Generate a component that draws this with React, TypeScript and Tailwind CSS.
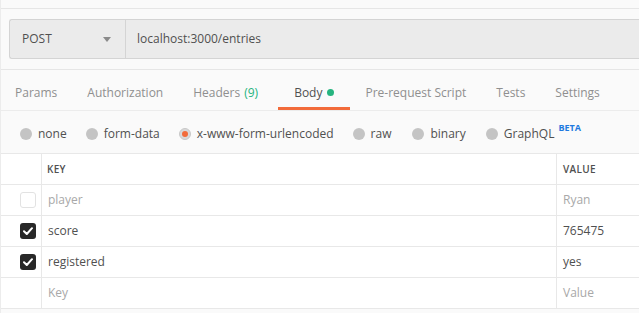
import React from "react";

const font = { fontFamily: '"Open Sans", "Liberation Sans", sans-serif' };

function Radio({ label, active, cls = "" }: { label: string; active?: boolean; cls?: string }) {
  return (
    <div className={`flex items-center gap-[6px] ${cls}`}>
      {active ? (
        <span className="w-[12px] h-[12px] rounded-full bg-[#d9d9d9] border border-[#c8c8c8] flex items-center justify-center">
          <span className="w-[6px] h-[6px] rounded-full bg-[#f26b3a]" />
        </span>
      ) : (
        <span className="w-[12px] h-[12px] rounded-full bg-[#c4c4c4]" />
      )}
      <span className="text-[12px] text-[#505050]">{label}</span>
    </div>
  );
}

function Check({ on }: { on: boolean }) {
  return on ? (
    <span className="w-[16px] h-[16px] rounded-[3px] bg-[#282828] flex items-center justify-center">
      <svg width="10" height="8" viewBox="0 0 10 8">
        <path d="M1 4.2 L3.8 7 L9 1.2" stroke="#fff" strokeWidth="2" fill="none" strokeLinecap="round" strokeLinejoin="round" />
      </svg>
    </span>
  ) : (
    <span className="w-[16px] h-[16px] rounded-[3px] border border-[#e2e2e2] bg-white" />
  );
}

function Row({
  check,
  k,
  v,
  dim,
}: {
  check: boolean | null;
  k: string;
  v: string;
  dim?: boolean;
}) {
  const color = dim ? "text-[#a8a8a8]" : "text-[#505050]";
  return (
    <div className="flex h-[31px] border-b border-[#e8e8e8] bg-white">
      <div className="w-[41px] border-r border-[#e8e8e8] flex items-center justify-end pr-[5px]">
        {check !== null && <Check on={check} />}
      </div>
      <div className={`flex-1 flex items-center pl-[6px] text-[12px] ${color}`}>{k}</div>
      <div className={`w-[83px] border-l border-[#e8e8e8] flex items-center pl-[6px] text-[12px] ${color}`}>{v}</div>
    </div>
  );
}

export default function App() {
  return (
    <div style={font} className="w-[639px] h-[313px] bg-[#fafafa] overflow-hidden border-l border-[#ececec]">
      <div className="h-[9px] border-b border-[#e6e6e6]" />
      <div className="pt-[10px] pb-[10px] pl-[8px] border-b border-[#e6e6e6]">
        <div className="flex h-[40px] bg-[#ebebeb] border border-r-0 border-[#d4d4d4] rounded-l-[3px]">
          <div className="w-[116px] border-r border-[#d4d4d4] flex items-center pl-[12px] pr-[14px] justify-between">
            <span className="text-[12px] text-[#505050]">POST</span>
            <svg width="8" height="5" viewBox="0 0 8 5">
              <path d="M0 0 H8 L4 5 Z" fill="#8a8a8a" />
            </svg>
          </div>
          <div className="flex items-center pl-[11px] text-[12px] text-[#505050]">localhost:3000/entries</div>
        </div>
      </div>
      <div className="h-[41px] border-b border-[#ececec] flex items-stretch pl-[14px] text-[12px] text-[#8f8f8f]">
        <div className="flex items-center pt-[5px]">Params</div>
        <div className="flex items-center pt-[5px] ml-[30px]">Authorization</div>
        <div className="flex items-center pt-[5px] ml-[30px]">
          Headers<span className="ml-[4px] text-[#26b47f]">(9)</span>
        </div>
        <div className="flex items-center ml-[20px] px-[16px] border-b-[3px] border-[#f26b3a] pt-[8px] text-[#505050]">
          Body<span className="ml-[5px] w-[7px] h-[7px] rounded-full bg-[#26b47f]" />
        </div>
        <div className="flex items-center pt-[5px] ml-[15px]">Pre-request Script</div>
        <div className="flex items-center pt-[5px] ml-[30px]">Tests</div>
        <div className="flex items-center pt-[5px] ml-[30px]">Settings</div>
      </div>
      <div className="h-[42px] flex items-center pl-[19px] pt-[3px]">
        <Radio label="none" />
        <Radio label="form-data" cls="ml-[19px]" />
        <Radio label="x-www-form-urlencoded" active cls="ml-[19px]" />
        <Radio label="raw" cls="ml-[19px]" />
        <Radio label="binary" cls="ml-[21px]" />
        <div className="flex items-start ml-[20px]">
          <Radio label="GraphQL" />
          <span className="ml-[4px] -mt-[2px] text-[9px] font-bold text-[#1f7ae0] leading-none">BETA</span>
        </div>
      </div>
      <div className="border-t border-[#e8e8e8]">
        <div className="flex h-[31px] border-b border-[#e8e8e8] bg-white">
          <div className="w-[41px] border-r border-[#e8e8e8]" />
          <div className="flex-1 flex items-center pl-[5px] text-[10px] font-semibold text-[#505050] tracking-[0.3px]">KEY</div>
          <div className="w-[83px] border-l border-[#e8e8e8] flex items-center pl-[6px] text-[10px] font-semibold text-[#505050] tracking-[0.3px]">VALUE</div>
        </div>
        <Row check={false} k="player" v="Ryan" dim />
        <Row check={true} k="score" v="765475" />
        <Row check={true} k="registered" v="yes" />
        <Row check={null} k="Key" v="Value" dim />
      </div>
    </div>
  );
}
